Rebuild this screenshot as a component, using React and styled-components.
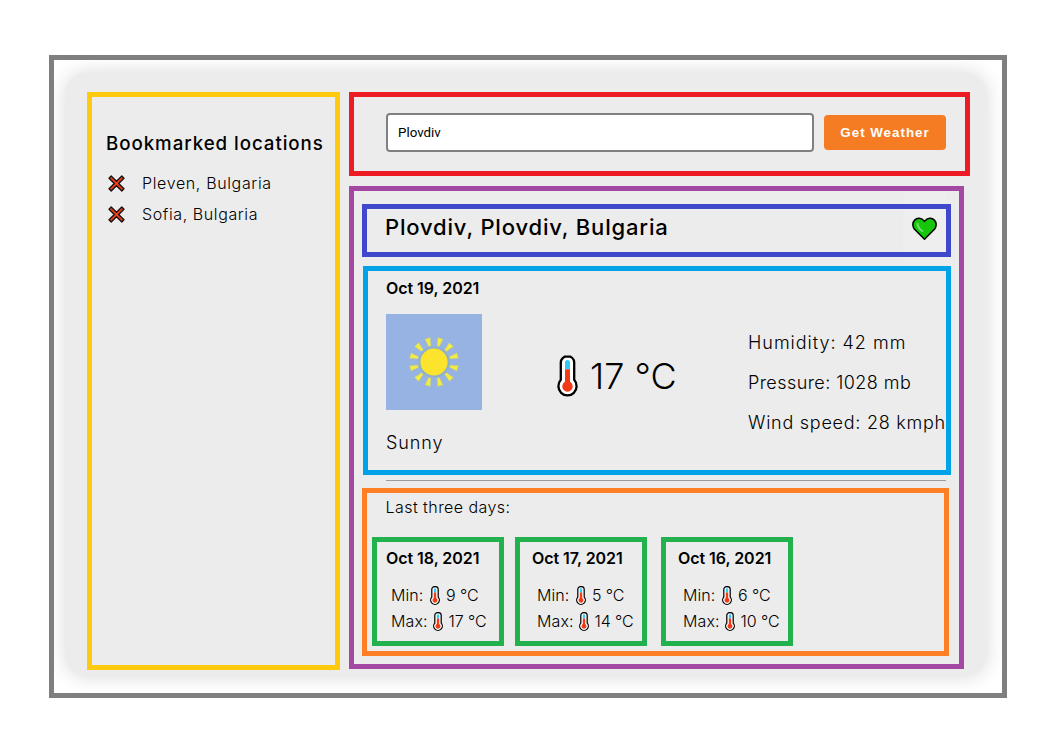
import React from "react";
import styled, { createGlobalStyle } from "styled-components";

const GlobalStyle = createGlobalStyle`
  * { box-sizing: border-box; }
  body {
    margin: 0;
    background: #fff;
    color: #000;
    font-family: Inter, "Liberation Sans", sans-serif;
    font-weight: 300;
    font-size: 16px;
  }
  h2, h3, h4, p, ul { margin: 0; padding: 0; }
`;

const Page = styled.div`
  padding: 55px 53px 58px 49px;
`;

const Frame = styled.div`
  height: 643px;
  border: 5px solid #7f7f7f;
  padding: 13px 16px 17px 12px;
  overflow: hidden;
`;

const Card = styled.main`
  isolation: isolate;
  display: flex;
  gap: 9px;
  height: 603px;
  padding: 19px 16px 0 21px;
  border-radius: 20px;
  background: #ececec;
  box-shadow: 0 0 20px rgba(0, 0, 0, 0.16);
`;

const Region = styled.section`
  border: 5px solid ${(p) => p.$color};
`;

const Bookmarks = styled(Region)`
  width: 253px;
  height: 578px;
  padding: 35px 0 0 14px;
`;

const BookmarksTitle = styled.h3`
  margin-bottom: 12px;
  font-size: 18.7px;
  line-height: 24px;
  font-weight: 500;
  letter-spacing: 0.95px;
  white-space: nowrap;
`;

const BookmarkList = styled.ul`
  list-style: none;
`;

const BookmarkItem = styled.li`
  display: flex;
  align-items: center;
  gap: 17px;
  height: 31px;
  padding-left: 2px;
  line-height: 31px;
  letter-spacing: ${(p) => p.$track}px;
`;

const Content = styled.div`
  display: flex;
  flex-direction: column;
  gap: 10px;
`;

const SearchBar = styled(Region)`
  display: flex;
  align-items: flex-start;
  gap: 10px;
  width: 621px;
  height: 84px;
  padding: 16px 0 0 32px;
`;

const SearchInput = styled.input`
  width: 428px;
  height: 39px;
  padding: 0 10px;
  border: 2px solid #808080;
  border-radius: 4px;
  background: #fff;
  color: #000;
  font: 400 13.33px Roboto, sans-serif;
  outline: none;
`;

const SearchButton = styled.button`
  width: 122px;
  height: 35px;
  margin-top: 2px;
  padding: 0;
  border: 0;
  border-radius: 4px;
  background: #f57c23;
  color: #fff;
  font: 700 13.33px "Liberation Sans", Arial, sans-serif;
  letter-spacing: 1px;
`;

const Weather = styled(Region)`
  width: 615px;
  height: 483px;
  padding: 13px 0 0 8px;
`;

const PlaceHeader = styled(Region)`
  display: flex;
  justify-content: space-between;
  width: 589px;
  height: 53px;
  padding: 3px 9px 0 18px;
`;

const PlaceName = styled.h2`
  font-size: 22px;
  line-height: 30px;
  font-weight: 500;
  letter-spacing: 0.83px;
`;

const FavouriteButton = styled.button`
  position: relative;
  width: 25px;
  height: 24px;
  margin-top: 5px;
  padding: 0;
  border: 0;
  background: none;

  &::before {
    content: "";
    position: absolute;
    z-index: -1;
    inset: -25px -10px -21px -9px;
    border-radius: 5px;
    background: #eeeeee;
  }
`;

const Today = styled(Region)`
  width: 588px;
  height: 209px;
  margin: 9px 0 0 1px;
  padding: 7px 0 0 17px;
`;

const DayTitle = styled.h4`
  padding-left: 1px;
  font-size: 16px;
  line-height: 20px;
  font-weight: 600;
  letter-spacing: -0.05px;
  white-space: nowrap;
`;

const TodayBody = styled.div`
  display: grid;
  grid-template-columns: 171px 191px 1fr;
  padding-left: 1px;
`;

const Condition = styled.div`
  padding-top: 16px;
`;

const ConditionLabel = styled.p`
  margin-top: 21px;
  font-size: 18px;
  line-height: 24px;
  letter-spacing: 0.9px;
`;

const Temperature = styled.div`
  display: flex;
  align-items: flex-start;
  gap: 12px;
  padding-top: 57px;
  font-size: 36px;
  line-height: 43px;
`;

const Stats = styled.div`
  padding-top: 25px;
  font-size: 18px;
  line-height: 40px;
`;

const Stat = styled.p`
  white-space: nowrap;
  letter-spacing: ${(p) => p.$track}px;
`;

const Divider = styled.hr`
  width: 560px;
  height: 1px;
  margin: 5px 0 7px 24px;
  border: 0;
  background: #9a9a9a;
`;

const History = styled(Region)`
  width: 587px;
  height: 168px;
  padding: 4px 0 0 5px;
`;

const HistoryTitle = styled.p`
  margin: 0 0 20px 13.5px;
  line-height: 20px;
  letter-spacing: 0.44px;
`;

const HistoryDays = styled.div`
  display: grid;
  grid-template-columns: 143px 146px 132px;
`;

const DayCard = styled(Region)`
  width: 132px;
  height: 109px;
  padding: 6px 0 0 ${(p) => p.$inset}px;
`;

const Readings = styled.div`
  padding: 14px 0 0 6px;
`;

const Reading = styled.div`
  display: flex;
  align-items: center;
  height: 26px;
  line-height: 26px;
  white-space: nowrap;
`;

const ReadingLabel = styled.span`
  width: ${(p) => p.$width}px;
  letter-spacing: 0.1px;
`;

const ReadingValue = styled.span`
  margin-left: 6px;
  letter-spacing: -0.1px;
`;

function Thermometer({ width, height, stroke }) {
  return (
    <svg width={width} height={height} viewBox="0 0 21 41" preserveAspectRatio="none">
      <path
        d="M10.5 1.2C6.6 1.2 3.8 3.8 3.8 7.4v16.8a9.1 9.1 0 1 0 13.4 0V7.4c0-3.6-2.8-6.2-6.7-6.2Z"
        fill="#fff"
        stroke="#000"
        strokeWidth={stroke}
      />
      <path d="M8 14V7.5a2.5 2.5 0 0 1 5 0V14Z" fill="#31c9f5" />
      <path d="M8 14h5v12.1a5.2 5.2 0 1 1-5 0Z" fill="#f23a16" />
    </svg>
  );
}

function Cross() {
  return (
    <svg width="17" height="17" viewBox="0 0 17 17">
      <path
        d="M3.2 1 8.500 6.300 13.800 1 16 3.200 10.700 8.500 16 13.800 13.800 16 8.500 10.700 3.200 16 1 13.800 6.300 8.500 1 3.200Z"
        fill="#f23a16"
        stroke="#111"
        strokeWidth="1.3"
        strokeLinejoin="round"
      />
    </svg>
  );
}

function Heart() {
  return (
    <svg width="25" height="24" viewBox="0 0 25 24">
      <path
        d="M12.5 22.3 2.3 12C.2 9.500.5 5.200 2.600 3.100 5 .7 9.500.3 12.500 4.400 15.500.3 20 .7 22.400 3.100c2.100 2.100 2.400 6.400.3 8.900Z"
        fill="#16c60c"
        stroke="#000"
        strokeWidth="1.5"
        strokeLinejoin="round"
      />
      <path d="M5.600 6.800c0 3 1.900 5.400 4.700 7.200" fill="none" stroke="#75dc70" strokeWidth="2" strokeLinecap="round" />
    </svg>
  );
}

const rays = Array.from({ length: 12 }, (_, i) => 15 + i * 30);

function Sun() {
  return (
    <svg width="96" height="96" viewBox="0 0 96 96" display="block">
      <rect width="96" height="96" fill="#96b3e3" />
      <circle cx="48" cy="48" r="15.500" fill="#8fb0c8" />
      <circle cx="48" cy="48" r="13.600" fill="#fbe42b" />
      {rays.map((angle) => (
        <path
          key={angle}
          d="M45 23.300 51 23.300 49.300 31.800H46.700Z"
          fill="#f2ea45"
          stroke="#a9bfae"
          strokeWidth="0.700"
          transform={`rotate(${angle} 48 48)`}
        />
      ))}
    </svg>
  );
}

const bookmarks = [
  { name: "Pleven, Bulgaria", track: 0.64 },
  { name: "Sofia, Bulgaria", track: 0.6 },
];

const stats = [
  { text: "Humidity: 42 mm", track: 0.98 },
  { text: "Pressure: 1028 mb", track: 0.44 },
  { text: "Wind speed: 28 kmph", track: 0.74 },
];

const days = [
  { date: "Oct 18, 2021", min: 9, max: 17, inset: 8 },
  { date: "Oct 17, 2021", min: 5, max: 14, inset: 11 },
  { date: "Oct 16, 2021", min: 6, max: 10, inset: 11 },
];

export default function App() {
  return (
    <Page>
      <GlobalStyle />
      <Frame>
        <Card>
          <Bookmarks as="aside" $color="#ffc90e">
            <BookmarksTitle>Bookmarked locations</BookmarksTitle>
            <BookmarkList>
              {bookmarks.map((b) => (
                <BookmarkItem key={b.name} $track={b.track}>
                  <Cross />
                  {b.name}
                </BookmarkItem>
              ))}
            </BookmarkList>
          </Bookmarks>
          <Content>
            <SearchBar $color="#ed1c24">
              <SearchInput defaultValue="Plovdiv" />
              <SearchButton>Get Weather</SearchButton>
            </SearchBar>
            <Weather $color="#a349a4">
              <PlaceHeader as="header" $color="#3f48cc">
                <PlaceName>Plovdiv, Plovdiv, Bulgaria</PlaceName>
                <FavouriteButton aria-label="Bookmark">
                  <Heart />
                </FavouriteButton>
              </PlaceHeader>
              <Today $color="#00a2e8">
                <DayTitle>Oct 19, 2021</DayTitle>
                <TodayBody>
                  <Condition>
                    <Sun />
                    <ConditionLabel>Sunny</ConditionLabel>
                  </Condition>
                  <Temperature>
                    <Thermometer width={21} height={42} stroke={2.3} />
                    <span>17 °C</span>
                  </Temperature>
                  <Stats>
                    {stats.map((s) => (
                      <Stat key={s.text} $track={s.track}>{s.text}</Stat>
                    ))}
                  </Stats>
                </TodayBody>
              </Today>
              <Divider />
              <History $color="#ff7f27">
                <HistoryTitle>Last three days:</HistoryTitle>
                <HistoryDays>
                  {days.map((d) => (
                    <DayCard key={d.date} as="article" $color="#22b14c" $inset={d.inset}>
                      <DayTitle>{d.date}</DayTitle>
                      <Readings>
                        <Reading>
                          <ReadingLabel $width={39}>Min:</ReadingLabel>
                          <Thermometer width={10} height={19} stroke={2.6} />
                          <ReadingValue>{d.min} °C</ReadingValue>
                        </Reading>
                        <Reading>
                          <ReadingLabel $width={41.5}>Max:</ReadingLabel>
                          <Thermometer width={10} height={19} stroke={2.6} />
                          <ReadingValue>{d.max} °C</ReadingValue>
                        </Reading>
                      </Readings>
                    </DayCard>
                  ))}
                </HistoryDays>
              </History>
            </Weather>
          </Content>
        </Card>
      </Frame>
    </Page>
  );
}
